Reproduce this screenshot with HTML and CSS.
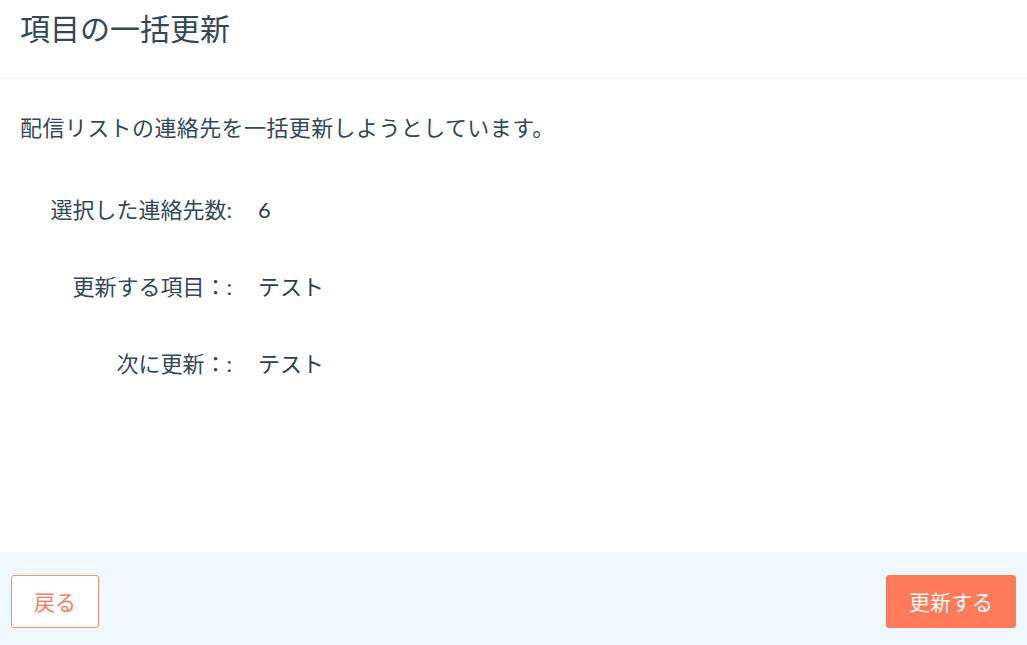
FILE: index.html
```html
<!DOCTYPE html>
<html lang="ja">
<head>
<meta charset="utf-8">
<title>項目の一括更新</title>
<link rel="stylesheet" href="styles.css">
</head>
<body>
<div class="modal">
  <header class="modal-header">
    <h1 class="modal-title">項目の一括更新</h1>
  </header>
  <main class="modal-body">
    <p class="intro">配信リストの連絡先を一括更新しようとしています。</p>
    <div class="details">
      <div class="label">選択した連絡先数:</div>
      <div class="value">6</div>
      <div class="label">更新する項目：:</div>
      <div class="value">テスト</div>
      <div class="label">次に更新：:</div>
      <div class="value">テスト</div>
    </div>
  </main>
  <footer class="modal-footer">
    <button class="btn btn-secondary" type="button">戻る</button>
    <button class="btn btn-primary" type="button">更新する</button>
  </footer>
</div>
</body>
</html>
```

FILE: styles.css
```css
* { box-sizing: border-box; }
html, body { margin: 0; padding: 0; height: 100%; }
body {
  font-family: Lato, "Noto Sans CJK JP", sans-serif;
  color: #33475b;
  background: #ffffff;
}
.modal {
  display: flex;
  flex-direction: column;
  height: 100vh;
}
.modal-header {
  height: 79px;
  padding: 9px 20px 0;
  border-bottom: 1px solid #eef3f8;
}
.modal-title {
  margin: 0;
  font-size: 30px;
  line-height: 38px;
  font-weight: 400;
  color: #33475b;
}
.modal-body {
  flex: 1;
  padding: 34px 20px 0;
}
.intro {
  margin: 0;
  font-size: 22px;
  letter-spacing: 0.4px;
  line-height: 30px;
}
.details {
  display: grid;
  grid-template-columns: 212px auto;
  column-gap: 26px;
  row-gap: 47px;
  margin-top: 52px;
  font-size: 22px;
  line-height: 30px;
}
.label {
  text-align: right;
}
.value {
  color: #2d3e50;
}
.modal-footer {
  height: 93px;
  background: #f0f8fd;
  display: flex;
  align-items: center;
  justify-content: space-between;
  padding: 5px 11px 0;
}
.btn {
  height: 53px;
  padding: 0 22px;
  border-radius: 3px;
  font-family: Lato, "Noto Sans CJK JP", sans-serif;
  font-size: 21px;
  cursor: pointer;
}
.btn-secondary {
  background: #ffffff;
  border: 1px solid #ff8f73;
  color: #ff7a59;
}
.btn-primary {
  background: #ff7a59;
  border: 1px solid #ff7a59;
  color: #ffffff;
  padding: 0 22px;
}
```
